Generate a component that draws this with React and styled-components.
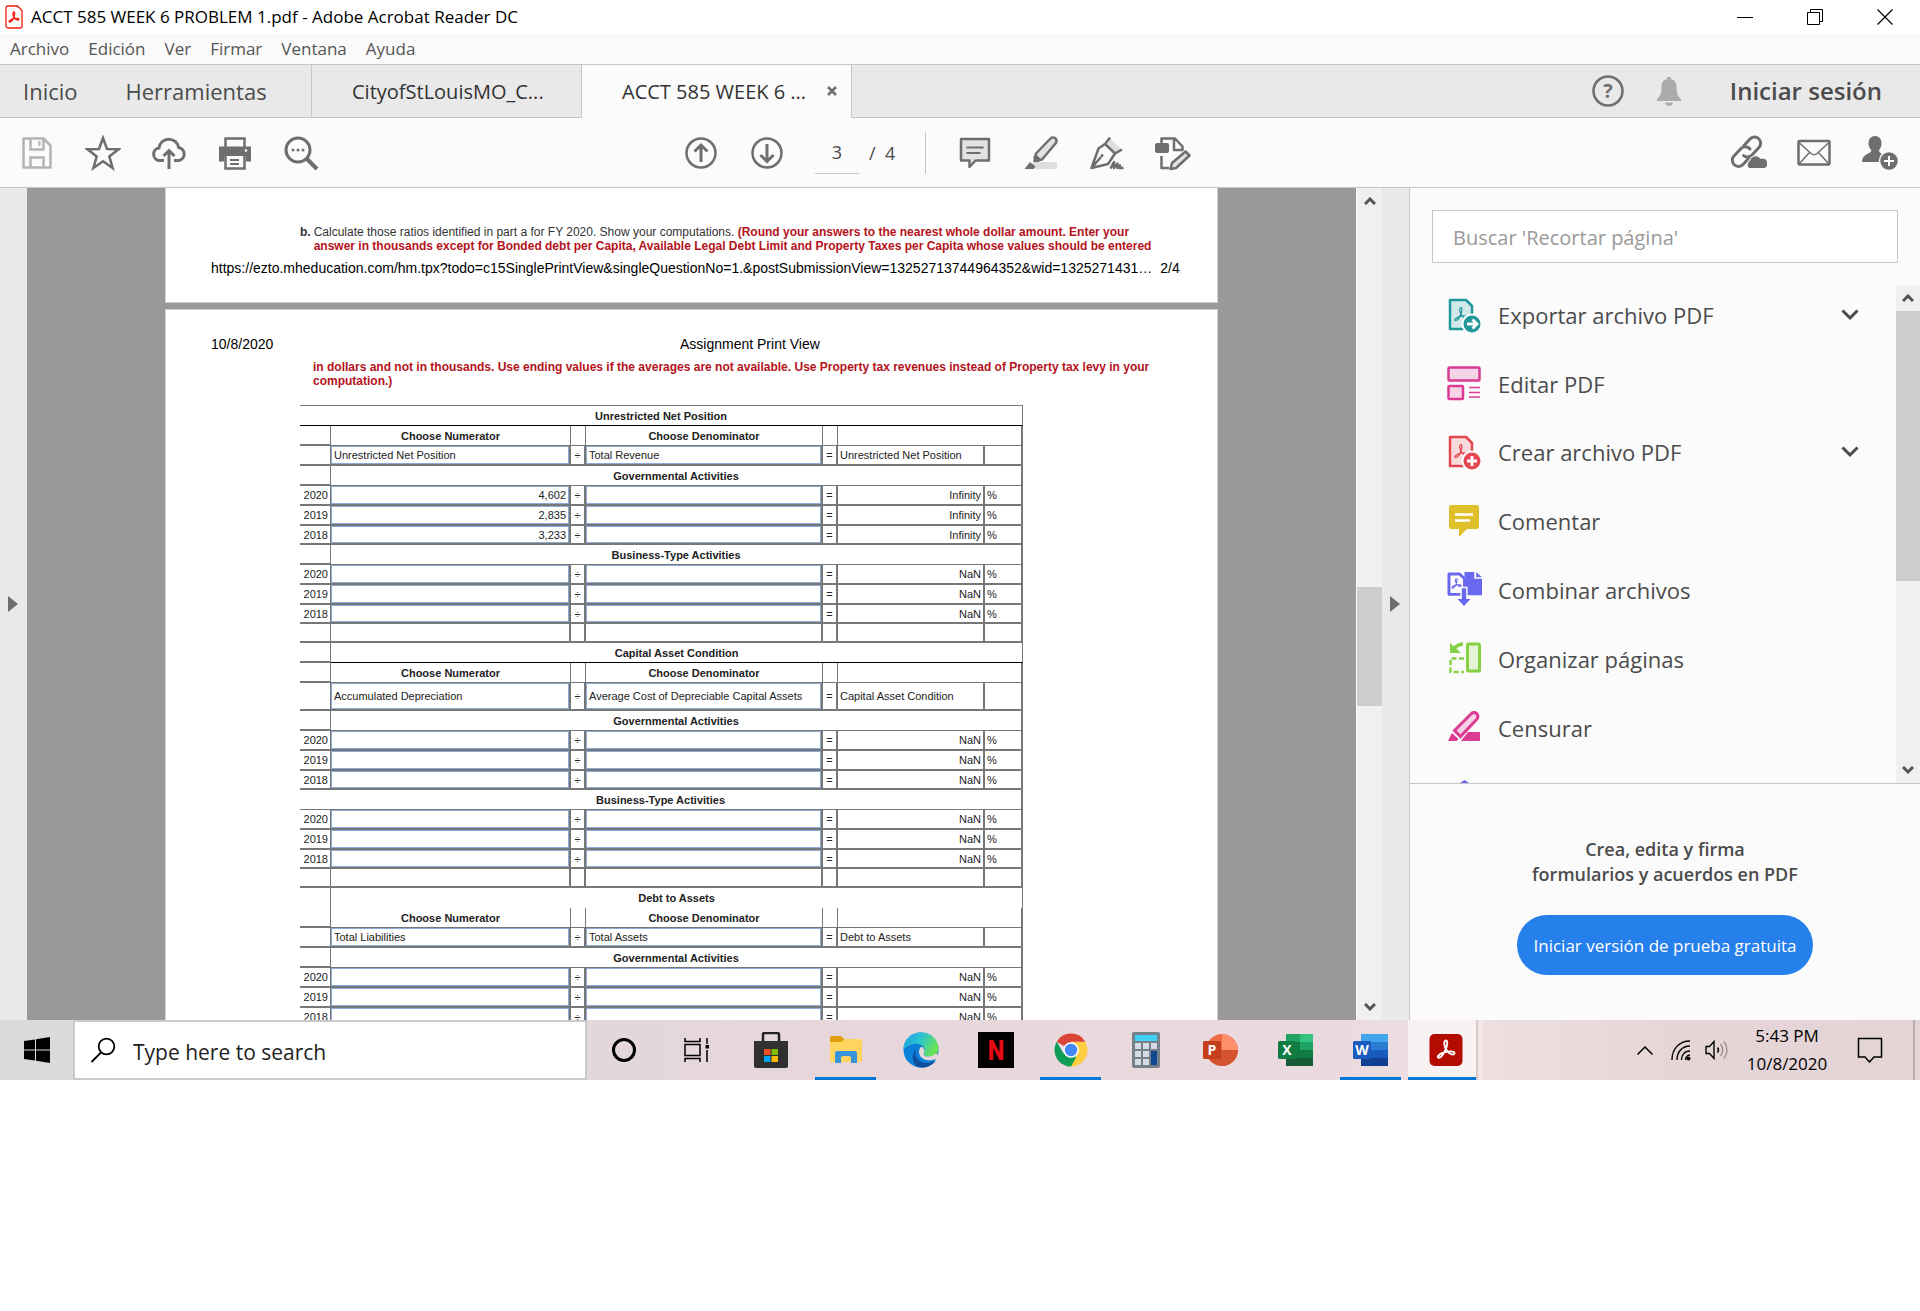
// src/App.jsx
import styled, { createGlobalStyle, css } from 'styled-components';

const GlobalStyle = createGlobalStyle`
  * {
    box-sizing: border-box;
  }

  body {
    margin: 0;
    background: #ffffff;
    font-family: "Open Sans", "Noto Sans", sans-serif;
    color: #4b4b4b;
  }

  button, input {
    font: inherit;
    color: inherit;
    border: 0;
    padding: 0;
    background: none;
  }
`;

const Screen = styled.div`
  aspect-ratio: 16 / 9;
  display: flex;
  flex-direction: column;
  overflow: hidden;
`;

/* ---------- window chrome ---------- */

const TitleBar = styled.header`
  flex: none;
  height: 34px;
  display: flex;
  align-items: center;
  padding-left: 5px;
  background: #ffffff;
`;

const WindowTitle = styled.h1`
  flex: 1;
  margin: 0 0 0 8px;
  font-size: 17px;
  font-weight: 400;
  line-height: 34px;
  color: #000000;
`;

const WindowButton = styled.button`
  width: 70px;
  height: 34px;
  display: flex;
  align-items: center;
  justify-content: center;
`;

const MenuBar = styled.nav`
  flex: none;
  height: 31px;
  display: flex;
  align-items: center;
  gap: 19px;
  padding-left: 10px;
  background: #fafafa;
  border-bottom: 1px solid #c6c6c6;
`;

const MenuItem = styled.button`
  font-size: 17px;
  line-height: 30px;
  color: #555555;
`;

const TabBar = styled.div`
  flex: none;
  height: 53px;
  display: flex;
  background: #e9e9e9;
`;

const TabGroup = styled.div`
  display: flex;
  align-items: center;
  gap: 48px;
  width: 312px;
  padding-left: 23px;
  border-right: 1px solid #c6c6c6;
  border-bottom: 1px solid #c6c6c6;
`;

const HomeTab = styled.button`
  font-size: 22px;
  line-height: 30px;
`;

const DocTab = styled.div`
  width: 270px;
  display: flex;
  align-items: center;
  gap: 17px;
  padding-left: 40px;
  font-size: 20px;
  color: #333333;
  border-right: 1px solid #c6c6c6;
  border-bottom: 1px solid ${(props) => (props.$active ? '#fbfbfb' : '#c6c6c6')};
  background: ${(props) => (props.$active ? '#fbfbfb' : 'transparent')};
`;

const DocTabName = styled.button`
  width: 188px;
  text-align: left;
  white-space: nowrap;
`;

const CloseTab = styled.button`
  display: flex;
`;

const AccountArea = styled.div`
  flex: 1;
  display: flex;
  align-items: center;
  justify-content: flex-end;
  padding-right: 38px;
  border-bottom: 1px solid #c6c6c6;
`;

const AccountButton = styled.button`
  width: 61px;
  display: flex;
  justify-content: center;
`;

const SignIn = styled.button`
  margin-left: 30px;
  font-size: 24px;
  font-weight: 600;
  line-height: 30px;
`;

/* ---------- toolbar ---------- */

const Toolbar = styled.div`
  flex: none;
  height: 70px;
  display: flex;
  align-items: center;
  background: #fbfbfb;
  border-bottom: 1px solid #c6c6c6;
`;

const FileTools = styled.div`
  flex: none;
  width: 668px;
  display: flex;
  padding-left: 4px;
`;

const PageTools = styled.div`
  flex: 1;
  display: flex;
  align-items: center;
`;

const ShareTools = styled.div`
  display: flex;
  padding-right: 7px;
`;

const ToolButton = styled.button`
  width: 66px;
  height: 42px;
  display: flex;
  align-items: center;
  justify-content: center;
  color: ${(props) => (props.$muted ? '#b4b4b4' : '#6e6e6e')};
`;

const PageInput = styled.input`
  width: 44px;
  height: 42px;
  margin-left: 15px;
  font-size: 18px;
  text-align: center;
  border-bottom: 1px solid #c6c6c6;
`;

const PageCount = styled.span`
  margin-left: 10px;
  font-size: 18px;
  white-space: pre;
`;

const ToolDivider = styled.span`
  width: 1px;
  height: 42px;
  margin: 0 16px 0 30px;
  background: #c6c6c6;
`;

/* ---------- workspace ---------- */

const Workspace = styled.main`
  flex: 1;
  min-height: 0;
  display: flex;
  background: #e9e9e9;
`;

const Rail = styled.button`
  flex: none;
  width: 27px;
  display: flex;
  align-items: center;
  padding-left: 8px;
  background: #e9e9e9;
`;

const Viewport = styled.section`
  flex: 1;
  min-width: 0;
  overflow: hidden;
  background: #999999;
  font-family: "Liberation Sans", Arial, sans-serif;
`;

const Page = styled.article`
  max-width: 1053px;
  margin: 0 auto 6px;
  background: #ffffff;
  border: 1px solid #cfcfcf;
  border-top-width: ${(props) => (props.$continued ? '0' : '1px')};
  padding: ${(props) => (props.$continued ? '37px 45px 26px' : '26px 45px 24px')};
`;

const Question = styled.p`
  display: flex;
  gap: 3px;
  margin: 0 0 0 89px;
  font-size: 12px;
  line-height: 14px;
  color: #333333;
  white-space: nowrap;
`;

const Instruction = styled.strong`
  color: #b5121b;
`;

const Continued = styled.p`
  margin: 8px 0 17px 102px;
  font-size: 12px;
  line-height: 14px;
  white-space: nowrap;
`;

const PageLine = styled.div`
  display: grid;
  grid-template-columns: ${(props) => (props.$footer ? 'auto 1fr' : '469px 1fr')};
  gap: ${(props) => (props.$footer ? '8px' : '0')};
  margin-top: ${(props) => (props.$footer ? '7px' : '0')};
  font-size: 14px;
  line-height: 16px;
  color: #000000;
  white-space: nowrap;
`;

const Ratios = styled.table`
  width: 723px;
  margin-left: 89px;
  table-layout: fixed;
  border-collapse: separate;
  border-spacing: 0;
  border-top: 1px solid #777777;
  font-size: 11px;
  line-height: 12px;
  color: #222222;
`;

const Row = styled.tr`
  height: ${(props) => props.$height || 20}px;
`;

const cell = css`
  padding: 0 2px;
  border: 0 solid #777777;
  border-right-width: 2px;
  border-bottom-width: 2px;
  white-space: nowrap;
  text-align: ${(props) => props.$align || 'left'};
`;

const Cell = styled.td`
  ${cell}
`;

const LabelCell = styled.td`
  ${cell}
  border-right-width: 1px;
  border-bottom-width: ${(props) => (props.$open ? '0' : '2px')};
  text-align: right;
`;

const Field = styled.td`
  ${cell}
  padding: 0 3px;
  box-shadow: inset 0 0 0 1px #8eaad6;
`;

const Sign = styled.td`
  ${cell}
  padding: 0;
  text-align: center;
`;

const Heading = styled.th`
  ${cell}
  text-align: center;
  border-bottom-width: ${(props) => (props.$open ? '0' : '1px')};
  border-bottom-color: ${(props) => (props.$rule ? '#000000' : '#777777')};
  border-right-width: ${(props) => (props.$edge ? '2px' : '1px')};
`;

/* ---------- scrollbars ---------- */

const ScrollRail = styled.div`
  flex: none;
  width: ${(props) => props.$width}px;
  display: flex;
  flex-direction: column;
  background: #f0f0f0;
  border-left: 1px solid #fbfbfb;
`;

const ScrollButton = styled.button`
  flex: none;
  height: 26px;
  display: flex;
  align-items: center;
  justify-content: center;
  color: #555555;
`;

const ScrollPart = styled.div`
  flex: ${(props) => props.$grow} 1 0;
  background: ${(props) => (props.$thumb ? '#cdcdcd' : 'transparent')};
`;

/* ---------- tools panel ---------- */

const ToolsPanel = styled.aside`
  flex: none;
  width: 511px;
  display: flex;
  flex-direction: column;
  background: #fbfbfb;
  border-left: 1px solid #c6c6c6;
`;

const ToolSearch = styled.input`
  flex: none;
  height: 53px;
  margin: 22px;
  padding: 2px 20px 0;
  font-size: 20px;
  background: #ffffff;
  border: 1px solid #c6c6c6;

  &::placeholder {
    color: #999999;
    opacity: 1;
  }
`;

const ToolScroller = styled.div`
  flex: none;
  height: 499px;
  display: flex;
  overflow: hidden;
  border-bottom: 1px solid #c6c6c6;
`;

const ToolList = styled.ul`
  flex: 1;
  display: flex;
  flex-direction: column;
  gap: 8px;
  margin: 0;
  padding: 0;
  list-style: none;
`;

const ToolItem = styled.li`
  flex: none;
  height: ${(props) => (props.$expands ? 60 : 61)}px;
  display: flex;
  align-items: center;
  padding: 0 36px 0 37px;
`;

const ToolLink = styled.button`
  flex: 1;
  display: flex;
  align-items: center;
  gap: 16px;
  font-size: 22px;
  line-height: 30px;
`;

const Promo = styled.div`
  flex: 1;
  display: flex;
  flex-direction: column;
  align-items: center;
  padding-top: 53px;
`;

const PromoText = styled.p`
  margin: 0 0 28px;
  font-size: 18px;
  font-weight: 600;
  line-height: 25px;
  text-align: center;
`;

const TrialButton = styled.button`
  height: 60px;
  padding: 0 16px;
  font-size: 17px;
  color: #ffffff;
  background: #2680eb;
  border-radius: 30px;
`;

/* ---------- taskbar ---------- */

const Taskbar = styled.footer`
  flex: none;
  height: 60px;
  display: flex;
  background: linear-gradient(90deg, #dadadd 0%, #e0d8db 20%, #e7d6da 45%, #ebdbe0 70%, #eedfe0 77%, #e6d5d7 88%, #e4d4d5 100%);
  color: #000000;
`;

const StartButton = styled.button`
  flex: none;
  width: 73px;
  display: flex;
  align-items: center;
  justify-content: center;
`;

const TaskSearch = styled.div`
  flex: none;
  width: 514px;
  display: flex;
  align-items: center;
  gap: 17px;
  padding-left: 15px;
  background: #ffffff;
  border: 2px solid #cacaca;
`;

const TaskInput = styled.input`
  flex: 1;
  padding-top: 3px;
  font-size: 21px;
  line-height: 30px;

  &::placeholder {
    color: #222222;
    opacity: 1;
  }
`;

const TaskButton = styled.button`
  width: ${(props) => (props.$system ? 73 : 75)}px;
  display: flex;
  align-items: center;
  justify-content: center;
  background-color: ${(props) => (props.$active ? '#f8f2f2' : 'transparent')};
  background-image: ${(props) => (props.$running ? 'linear-gradient(#0078d7, #0078d7)' : 'none')};
  background-size: ${(props) => (props.$active ? '100%' : '61px')} 3px;
  background-position: bottom center;
  background-repeat: no-repeat;
  box-shadow: ${(props) => (props.$active ? 'inset -5px 0 #f2e6e7, inset -7px 0 #d6cacb' : 'none')};
`;

const Tray = styled.div`
  flex: 1;
  display: flex;
  align-items: center;
  justify-content: flex-end;
`;

const TrayButton = styled.button`
  width: 36px;
  display: flex;
  align-items: center;
  justify-content: center;
`;

const Clock = styled.time`
  width: 96px;
  margin: 0 17px 0 4px;
  font-size: 17px;
  line-height: 28px;
  text-align: center;
`;

const ShowDesktop = styled.button`
  width: 7px;
  height: 60px;
  margin-left: 25px;
  border-left: 2px solid #b9adaf;
`;

/* ---------- icons ---------- */

const Icon = ({ w = 36, h = w, box, children }) => (
  <svg
    width={w}
    height={h}
    viewBox={box || `0 0 ${w} ${h}`}
    fill="none"
    stroke="currentColor"
    strokeWidth="2.5"
    aria-hidden="true"
  >
    {children}
  </svg>
);

const TREFOIL =
  'M12 3.5c1.6 0 1.6 2.8.6 6.2C11.2 14.2 8 20.5 5 20.8 2.8 20.8 3.6 17.8 8 16.1c3.6-1.4 8.6-2 11-1.4 2.6.8 1.6 3-.6 2.8C14.8 17 10.8 12.4 10.3 7.2 10.1 5 10.7 3.5 12 3.5z';

const PdfIcon = () => (
  <Icon w={18} h={24}>
    <path d="M3 1h9.500l4.500 4.500V21a2 2 0 0 1-2 2H3a2 2 0 0 1-2-2V3a2 2 0 0 1 2-2z" stroke="#f01c10" strokeWidth="1.300" />
    <path d={TREFOIL} transform="translate(2 5) scale(.58)" stroke="#f01c10" strokeWidth="2.400" />
  </Icon>
);

const SaveIcon = () => (
  <Icon w={32}>
    <path d="M2.500 1.500h20l7 7v22h-27z" strokeLinejoin="round" />
    <path d="M9.500 2v10.500h13V2M9.500 30V20.500h13V30" />
    <path d="M18.500 4v5" strokeWidth="2" />
  </Icon>
);

const StarIcon = () => (
  <Icon>
    <path d="M18 3l4 11 11.500.300-9.200 7.100 3.300 11.600L18 26.300 8.400 33l3.300-11.600L2.500 14.300 14 14z" />
  </Icon>
);

const CloudUpIcon = () => (
  <Icon>
    <path d="M13 25.500H8.500a6.300 6.300 0 0 1-.600-12.500 10 10 0 0 1 19.800-.500 6.600 6.600 0 0 1 0 13H23" strokeWidth="3" />
    <path d="M18 34V16M12.500 21l5.500-5.500 5.500 5.500" strokeWidth="3" />
  </Icon>
);

const PrintIcon = () => (
  <Icon>
    <path d="M8.500 12V3.500h19V12" />
    <path d="M2 11.500h32v15h-5V21H7v5.500H2z" fill="currentColor" stroke="none" />
    <path d="M8.500 21v12.500h19V21" />
    <path d="M13 25h9M13 29h9" strokeWidth="2" />
    <circle cx="29" cy="15.500" r="1.300" fill="#fff" stroke="none" />
  </Icon>
);

const FindIcon = () => (
  <Icon>
    <circle cx="15" cy="15" r="12" strokeWidth="3" />
    <path d="M23.500 23.500L34 34" strokeWidth="4" />
    <g fill="currentColor" stroke="none">
      <circle cx="10" cy="15" r="1.500" />
      <circle cx="15" cy="15" r="1.500" />
      <circle cx="20" cy="15" r="1.500" />
    </g>
  </Icon>
);

const ArrowIcon = ({ down }) => (
  <Icon w={34}>
    <circle cx="17" cy="17" r="14.500" />
    <path
      d={down ? 'M17 8v17M10.500 19l6.500 6.500 6.500-6.500' : 'M17 26V9M10.500 15.500L17 9l6.500 6.500'}
      strokeWidth="3"
    />
  </Icon>
);

const NoteIcon = () => (
  <Icon w={34}>
    <path d="M3 3h28v21.500H17.500L11.500 31v-6.500H3z" fill="#e2e2e2" strokeLinejoin="round" />
    <path d="M8.500 11.500h17M8.500 17h14" strokeWidth="2" />
  </Icon>
);

const MarkerIcon = () => (
  <Icon>
    <path d="M10 27h24v7H8z" fill="#dedede" stroke="none" />
    <path d="M13 18.500L27.500 3.500a3.500 3.500 0 0 1 5 5L19 24.500 11.500 26z" fill="#e2e2e2" strokeLinejoin="round" />
    <path d="M12.500 19l6 5.500-3.500 3-5-5zM7 27l5.500 4.500-2 2.500H1.500z" fill="currentColor" stroke="none" />
  </Icon>
);

const SignIcon = () => (
  <Icon>
    <path d="M21 3l-4 6 9 9 6-4z" fill="#dedede" stroke="none" />
    <path d="M21 2.500L16 9l10 9.500 7-4" />
    <path d="M16 9l-6.500 4.500L2.500 33l16.500-4 7-10.500M2.500 33L12 22" strokeLinejoin="round" />
    <circle cx="13" cy="20.500" r="1.500" fill="currentColor" stroke="none" />
    <path d="M21.500 33.500l3.500-6.500v6l3.500-4.500v4.500l2.500-2.500v2.500h3.500" strokeLinejoin="round" />
  </Icon>
);

const EditPageIcon = () => (
  <Icon>
    <path d="M6.500 9V3.500H20l7.500 8v3.500H19V4" strokeLinejoin="round" />
    <path d="M6.500 21v12H14" strokeLinejoin="round" />
    <rect x="0" y="8" width="14" height="10" rx="2" fill="currentColor" stroke="none" />
    <path d="M15.500 34l1.500-6L30.500 16.500l4 4L21 33z" fill="#e2e2e2" strokeLinejoin="round" />
  </Icon>
);

const LinkCloudIcon = () => (
  <Icon w={38}>
    <g strokeWidth="3" strokeLinecap="round">
      <path d="M15 11.500l6-6.500a6 6 0 0 1 9 8.500l-7 7.500a6 6 0 0 1-8.500.500" />
      <path d="M19.500 24.500l-5.500 6a6 6 0 0 1-9-8.500l7-7.500a6 6 0 0 1 9 .500" />
    </g>
    <path
      d="M20 34.500a4.500 4.500 0 0 1 .500-7.500 6 6 0 0 1 11-2.500 4.500 4.500 0 0 1 4 10z"
      fill="currentColor"
      stroke="#fbfbfb"
      strokeWidth="1"
    />
  </Icon>
);

const MailIcon = () => (
  <Icon w={34} h={28}>
    <rect x="1.500" y="2" width="31" height="23.500" rx="1" />
    <path d="M2 3.500l12 11q3 2.500 6 0l12-11M2.500 24.500l10-11M31.500 24.500l-10-11" strokeWidth="1.500" />
  </Icon>
);

const PersonAddIcon = () => (
  <Icon>
    <path
      d="M13 1a6.500 6.500 0 0 1 6.500 7c0 4-1.500 5.500-2.500 7.500 0 4 8 3.500 9 11.500H0c0-8 8.500-8 9.500-11.500C8 13.500 6.500 12 6.500 8A6.500 6.500 0 0 1 13 1z"
      fill="currentColor"
      stroke="none"
    />
    <circle cx="27" cy="26" r="9.500" fill="currentColor" stroke="#fbfbfb" strokeWidth="1.500" />
    <path d="M27 21v10M22 26h10" stroke="#fff" strokeWidth="2" />
  </Icon>
);

const HelpIcon = () => (
  <Icon w={32}>
    <circle cx="16" cy="16" r="14.500" stroke="#6e6e6e" />
    <text x="16" y="23" textAnchor="middle" fontSize="20" fontWeight="700" fill="#6e6e6e" stroke="none">?</text>
  </Icon>
);

const BellIcon = () => (
  <Icon w={26} h={32}>
    <path
      d="M11 2h4v2c4 1 5.500 4 5.500 8 0 7 1.500 9.500 4.500 12v2H1v-2c3-2.500 4.500-5 4.500-12 0-4 1.500-7 5.500-8zM9 27.500h8q-1 3.500-4 3.500t-4-3.500z"
      fill="#ababab"
      stroke="none"
    />
  </Icon>
);

const RailArrow = () => (
  <Icon w={10} h={16}>
    <path d="M0 0l10 8-10 8z" fill="#6e6e6e" stroke="none" />
  </Icon>
);

const Chevron = ({ up, w = 12, h = 8, weight = 3 }) => (
  <Icon w={w} h={h} box="0 0 12 8">
    <path d={up ? 'M1 7l5-5 5 5' : 'M1 1l5 5 5-5'} strokeWidth={weight} />
  </Icon>
);

const PdfBadgeIcon = ({ color, tint, add }) => (
  <Icon w={35}>
    <path d="M3 2h16l6 6v23H3z" fill={tint} stroke={color} strokeLinejoin="round" />
    <path d={TREFOIL} transform="translate(5 7) scale(.75)" stroke={color} strokeWidth="1.700" />
    <circle cx="25" cy="26" r="9.500" fill={color} stroke="#fbfbfb" strokeWidth="2" />
    <path d={add ? 'M25 21v10M20 26h10' : 'M20 26h9M25.500 21.500L30 26l-4.500 4.500'} stroke="#fff" strokeWidth="2.800" />
  </Icon>
);

const EditPdfIcon = () => (
  <Icon w={35}>
    <g stroke="#dc3b93" fill="#f7d3e6">
      <rect x="1.500" y="1.500" width="31" height="13" rx="1" />
      <rect x="1.500" y="20" width="14.500" height="13" rx="1" />
      <path d="M22 21.500h11M22 26.500h11M22 31h11" strokeWidth="1.500" />
    </g>
  </Icon>
);

const CommentIcon = () => (
  <Icon w={35}>
    <path d="M4 2h26a2 2 0 0 1 2 2v20a2 2 0 0 1-2 2H20l-8 8v-8H4a2 2 0 0 1-2-2V4a2 2 0 0 1 2-2z" fill="#dfbf2a" stroke="none" />
    <path d="M8 11.500h18M8 17.500h15" stroke="#fff" />
  </Icon>
);

const CombineIcon = () => (
  <Icon w={35} box="0 0 36 36">
    <path d="M18 0h10v7h8v17H18z" fill="#6968f0" stroke="none" />
    <path d="M30 0v5.500h6z" fill="#6968f0" stroke="none" />
    <path d="M2 2h11l5 5v16H2z" fill="#fbfbfb" stroke="#6968f0" strokeWidth="3" strokeLinejoin="round" />
    <path d={TREFOIL} transform="translate(3 5) scale(.56)" stroke="#6968f0" strokeWidth="2" />
    <path d="M14.500 16h6v11H26l-8.500 9L9 27h5.500z" fill="#6968f0" stroke="#fbfbfb" strokeWidth="1.500" />
  </Icon>
);

const OrganizeIcon = () => (
  <Icon w={35}>
    <g stroke="#86d143">
      <rect x="20.500" y="3" width="12" height="27" rx="1" fill="#e4f4d5" strokeWidth="3" />
      <path d="M17 17.500H3.500V31H17" strokeDasharray="5 2.500" />
      <path d="M16 3q-6 .500-9 5" strokeWidth="3.500" />
      <path d="M3 2v10h11z" fill="#86d143" stroke="none" />
    </g>
  </Icon>
);

const RedactIcon = () => (
  <Icon w={35}>
    <path d="M21 22h11a1 1 0 0 1 1 1v8H14z" fill="#dc3b93" stroke="none" />
    <path d="M7.500 20.500L24 4a3.500 3.500 0 0 1 6 5L13.500 26.500z" fill="#f7d3e6" stroke="#dc3b93" strokeWidth="3" />
    <path d="M5 23l6.500 6-2 2H1z" fill="#dc3b93" stroke="none" />
  </Icon>
);

const ProtectIcon = () => (
  <Icon w={35}>
    <path d="M3 8q9-1 14.500-5.500Q23 7 32 8v12q-4 10-14.500 13Q7 30 3 20z" fill="#d9d9fb" stroke="#6968f0" />
  </Icon>
);

const StartIcon = () => (
  <Icon w={26} h={26}>
    <path d="M0 4l11-1.600V12.500H0zM12 2.200L26 0v12.500H12zM0 13.500h11v10L0 22zM12 13.500h14V26l-14-2.200z" fill="#000" stroke="none" />
  </Icon>
);

const MagnifierIcon = () => (
  <Icon w={26}>
    <circle cx="16.500" cy="9.500" r="7.800" strokeWidth="1.800" />
    <path d="M11 15.500L1.500 25" strokeWidth="1.800" />
  </Icon>
);

const TaskViewIcon = () => (
  <Icon w={26} h={24}>
    <g strokeWidth="1.500">
      <rect x="1" y="6.500" width="15" height="11" />
      <path d="M1 0v3.500h15V0M1 24v-3.500h15V24M23 0v6M23 12v12" />
    </g>
    <rect x="21.500" y="7" width="3.500" height="3.500" fill="#000" stroke="none" />
  </Icon>
);

const StoreIcon = () => (
  <Icon w={36}>
    <path d="M10 11V2.500a1.500 1.500 0 0 1 1.500-1.500h13A1.500 1.500 0 0 1 26 2.500V11" stroke="#222" />
    <path d="M1 9h34v25a2 2 0 0 1-2 2H3a2 2 0 0 1-2-2z" fill="#303030" stroke="none" />
    <g stroke="none">
      <path d="M11 17h6.500v6H11z" fill="#f25022" />
      <path d="M18.500 17H25v6h-6.500z" fill="#7fba00" />
      <path d="M11 24h6.500v6H11z" fill="#00a4ef" />
      <path d="M18.500 24H25v6h-6.500z" fill="#ffb900" />
    </g>
  </Icon>
);

const FolderIcon = () => (
  <Icon w={34} h={28}>
    <g stroke="none">
      <path d="M1 2a2 2 0 0 1 2-2h9l3 3v4H1z" fill="#e09f0b" />
      <path d="M1 6h11l4-3h15a2 2 0 0 1 2 2v19a2 2 0 0 1-2 2H3a2 2 0 0 1-2-2z" fill="#ffd560" />
      <path d="M6 27V17a2 2 0 0 1 2-2h18a2 2 0 0 1 2 2v10h-6v-5a2 2 0 0 0-2-2h-6a2 2 0 0 0-2 2v5z" fill="#3a94dc" />
    </g>
  </Icon>
);

const EdgeIcon = () => (
  <Icon w={36}>
    <defs>
      <linearGradient id="edgeTop" x1="0" x2="1" y1="0" y2=".400">
        <stop offset="0" stopColor="#1b9de2" />
        <stop offset=".5" stopColor="#2cc3d2" />
        <stop offset="1" stopColor="#66e257" />
      </linearGradient>
    </defs>
    <g stroke="none">
      <circle cx="18" cy="18" r="17.500" fill="#0b80d8" />
      <path d="M.500 18C0 8 8 .500 18 .500S36 8 35.500 17c-.500 6-5 7.500-9 7.500-5 0-7-2-6-3.500 2-3 1-7-3-8.500-7-2-14 1-17 5.500z" fill="url(#edgeTop)" />
      <path d="M13 17c-3 8 4 14 11 14 4 0 7-1 9-2.500C30 33 24 36 18 35.500 10 35 7 25 13 17z" fill="#0f4f9e" />
      <path d="M18.500 14.500c-4 3-3 10 2 12.500 4 2 9 1.500 13.500-.500l2-3-3-2c-2 2-5 3-8 3-4 0-5-2-4-3.500 1-2 0-5-2.500-6.500z" fill="#e7d6da" />
    </g>
  </Icon>
);

const NetflixIcon = () => (
  <Icon w={36}>
    <path d="M0 0h36v36H0z" fill="#000" stroke="none" />
    <text
      x="18"
      y="28"
      textAnchor="middle"
      fontFamily="'Roboto Condensed', 'Liberation Sans Narrow', 'Roboto', sans-serif"
      fontSize="28"
      fontWeight="700"
      fill="#e50914"
      stroke="none"
    >
      N
    </text>
  </Icon>
);

const ChromeIcon = () => (
  <Icon w={34}>
    <g stroke="none">
      <path d="M17 17L2.700 8.800A16.500 16.500 0 0 1 31.300 8.800H17z" fill="#db4437" />
      <path d="M17 17L31.300 8.800A16.500 16.500 0 0 1 17 33.500z" fill="#ffcd40" />
      <path d="M17 17l5 7.500-5 9A16.500 16.500 0 0 1 2.700 8.800L9.500 20.500z" fill="#0f9d58" />
      <path d="M17 9h14.300L24 17z" fill="#ffcd40" />
      <circle cx="17" cy="17" r="7.800" fill="#fff" />
      <circle cx="17" cy="17" r="6.200" fill="#4285f4" />
    </g>
  </Icon>
);

const CalculatorIcon = () => (
  <Icon w={28} h={36}>
    <g stroke="none">
      <rect width="28" height="36" rx="2" fill="#75808a" />
      <path d="M3 3h22v6H3z" fill="#3fd0f5" />
      <path
        d="M3 11h6v6H3zM11 11h6v6h-6zM19 11h6v6h-6zM3 19h6v6H3zM11 19h6v6h-6zM3 27h6v6H3zM11 27h6v6h-6z"
        fill="#d4dbe4"
      />
      <path d="M19 19h6v14h-6z" fill="#12488f" />
    </g>
  </Icon>
);

const OFFICE = {
  P: { tile: '#c43e1c' },
  X: { tile: '#107c41', bands: ['#21a366', '#33c481', '#107c41', '#185c37'] },
  W: { tile: '#185abd', bands: ['#41a5ee', '#2b7cd3', '#185abd', '#103f91'] },
};

const OfficeIcon = ({ letter }) => {
  const { tile, bands } = OFFICE[letter];

  return (
    <Icon w={36} h={34}>
      <g stroke="none">
        {letter === 'P' && (
          <>
            <circle cx="19" cy="17" r="16" fill="#ed6c47" />
            <path d="M19 1a16 16 0 0 1 16 16H19z" fill="#ff8f6b" />
            <path d="M3 17h32a16 16 0 0 1-32 0z" fill="#d35230" />
          </>
        )}
        {letter === 'W' && bands.map((fill, i) => <rect key={fill} x="8" y={1 + i * 8} width="27" height="8" fill={fill} />)}
        {letter === 'X' && (
          <>
            <path d="M8 1h14v16H8z" fill={bands[0]} />
            <path d="M22 1h13v8H22z" fill={bands[1]} />
            <path d="M22 9h13v8H22z" fill={bands[0]} />
            <path d="M8 9h14v16H8zM22 17h13v8H22z" fill={bands[2]} />
            <path d="M8 25h27v8H8z" fill={bands[3]} />
          </>
        )}
        <rect y="8" width="18" height="18" rx="1.500" fill={tile} />
        <text x="9" y="22" textAnchor="middle" fontSize="14" fontWeight="700" fill="#fff">{letter}</text>
      </g>
    </Icon>
  );
};

const AcrobatIcon = () => (
  <Icon w={34}>
    <rect x=".500" y="1" width="33" height="32" rx="5" fill="#b30b00" stroke="none" />
    <path d={TREFOIL} transform="translate(5 4)" stroke="#fff" strokeWidth="1.900" />
  </Icon>
);

const WifiIcon = () => (
  <Icon w={20} h={22}>
    <g strokeWidth="1.400">
      <path d="M1 21C1 10 8 2 19 2M6 21C6 13 11 7 19 7M10.500 21c0-5 3-9 8.500-9M14.500 21c0-2.500 1.500-5 4.500-5" />
    </g>
    <circle cx="17.500" cy="19.500" r="2" fill="#000" stroke="none" />
  </Icon>
);

const VolumeIcon = () => (
  <Icon w={24} h={22}>
    <path d="M1 7.500v7h3.500L9 19.500v-17L4.500 7.500z" strokeWidth="1.400" />
    <path d="M12.500 8.500q2 2.500 0 5" strokeWidth="1.400" />
    <path d="M15.500 5q4.500 6 0 12M19 2.500q6 8.500 0 17" stroke="#9b9091" strokeWidth="1.400" />
  </Icon>
);

const NoticeIcon = () => (
  <Icon w={26}>
    <path d="M1.500 1.500h23v18.500H17l-4.500 5L8 20H1.500z" strokeWidth="1.500" />
  </Icon>
);

/* ---------- data ---------- */

const MENU = ['Archivo', 'Edición', 'Ver', 'Firmar', 'Ventana', 'Ayuda'];

const FILE_TOOLS = [
  { label: 'Guardar', icon: <SaveIcon />, muted: true },
  { label: 'Favoritos', icon: <StarIcon /> },
  { label: 'Subir', icon: <CloudUpIcon /> },
  { label: 'Imprimir', icon: <PrintIcon /> },
  { label: 'Buscar', icon: <FindIcon /> },
];

const MARKUP_TOOLS = [
  { label: 'Nota', icon: <NoteIcon /> },
  { label: 'Resaltar', icon: <MarkerIcon /> },
  { label: 'Firmar', icon: <SignIcon /> },
  { label: 'Editar página', icon: <EditPageIcon /> },
];

const SHARE_TOOLS = [
  { label: 'Compartir vínculo', icon: <LinkCloudIcon /> },
  { label: 'Correo', icon: <MailIcon /> },
  { label: 'Invitar', icon: <PersonAddIcon /> },
];

const PDF_TOOLS = [
  { name: 'Exportar archivo PDF', icon: <PdfBadgeIcon color="#1f979b" tint="#d2e9e9" />, expands: true },
  { name: 'Editar PDF', icon: <EditPdfIcon /> },
  { name: 'Crear archivo PDF', icon: <PdfBadgeIcon color="#e34850" tint="#f9dadc" add />, expands: true },
  { name: 'Comentar', icon: <CommentIcon /> },
  { name: 'Combinar archivos', icon: <CombineIcon /> },
  { name: 'Organizar páginas', icon: <OrganizeIcon /> },
  { name: 'Censurar', icon: <RedactIcon /> },
  { name: '', icon: <ProtectIcon /> },
];

const YEARS = ['2020', '2019', '2018'];

const SECTIONS = [
  {
    title: 'Unrestricted Net Position',
    numerator: 'Unrestricted Net Position',
    denominator: 'Total Revenue',
    values: ['4,602', '2,835', '3,233'],
    result: 'Infinity',
    wideTitle: true,
    rule: true,
  },
  {
    title: 'Capital Asset Condition',
    numerator: 'Accumulated Depreciation',
    denominator: 'Average Cost of Depreciable Capital Assets',
    values: [],
    result: 'NaN',
    tall: true,
    wideBusiness: true,
    rule: true,
  },
  {
    title: 'Debt to Assets',
    numerator: 'Total Liabilities',
    denominator: 'Total Assets',
    values: [],
    result: 'NaN',
  },
];

const APPS = [
  { name: 'Microsoft Store', icon: <StoreIcon /> },
  { name: 'File Explorer', icon: <FolderIcon />, running: true },
  { name: 'Edge', icon: <EdgeIcon /> },
  { name: 'Netflix', icon: <NetflixIcon /> },
  { name: 'Chrome', icon: <ChromeIcon />, running: true },
  { name: 'Calculator', icon: <CalculatorIcon /> },
  { name: 'PowerPoint', icon: <OfficeIcon letter="P" /> },
  { name: 'Excel', icon: <OfficeIcon letter="X" /> },
  { name: 'Word', icon: <OfficeIcon letter="W" />, running: true },
  { name: 'Acrobat Reader', icon: <AcrobatIcon />, running: true, active: true },
];

/* ---------- parts ---------- */

const Scrollbar = ({ width, before, thumb, after }) => (
  <ScrollRail $width={width}>
    <ScrollButton aria-label="Arriba"><Chevron up /></ScrollButton>
    <ScrollPart $grow={before} />
    <ScrollPart $grow={thumb} $thumb />
    <ScrollPart $grow={after} />
    <ScrollButton aria-label="Abajo"><Chevron /></ScrollButton>
  </ScrollRail>
);

const YearRows = ({ values = [], result }) =>
  YEARS.map((year, i) => (
    <Row key={year} $height={i === 2 ? 19 : 20}>
      <LabelCell>{year}</LabelCell>
      <Field $align="right">{values[i]}</Field>
      <Sign>÷</Sign>
      <Field />
      <Sign>=</Sign>
      <Cell $align="right">{result}</Cell>
      <Cell>%</Cell>
    </Row>
  ));

const Section = ({ section }) => (
  <tbody>
    <Row>
      {!section.wideTitle && <LabelCell $open={!section.rule} />}
      <Heading colSpan={section.wideTitle ? 7 : 6} $rule={section.rule} $open={!section.rule}>
        {section.title}
      </Heading>
    </Row>
    <Row>
      <LabelCell />
      <Heading>Choose Numerator</Heading>
      <Heading />
      <Heading>Choose Denominator</Heading>
      <Heading />
      <Heading colSpan={2} $edge />
    </Row>
    <Row $height={section.tall ? 28 : 20}>
      <LabelCell />
      <Field>{section.numerator}</Field>
      <Sign>÷</Sign>
      <Field>{section.denominator}</Field>
      <Sign>=</Sign>
      <Cell>{section.title}</Cell>
      <Cell />
    </Row>
    <Row>
      <LabelCell />
      <Heading colSpan={6} $edge>Governmental Activities</Heading>
    </Row>
    <YearRows values={section.values} result={section.result} />
    <Row>
      {!section.wideBusiness && <LabelCell />}
      <Heading colSpan={section.wideBusiness ? 7 : 6} $edge>Business-Type Activities</Heading>
    </Row>
    <YearRows result="NaN" />
    <Row $height={19}>
      <LabelCell />
      <Cell />
      <Cell />
      <Cell />
      <Cell />
      <Cell />
      <Cell />
    </Row>
  </tbody>
);

const App = () => {
  return (
    <Screen>
      <GlobalStyle />
      <TitleBar>
        <PdfIcon />
        <WindowTitle>ACCT 585 WEEK 6 PROBLEM 1.pdf - Adobe Acrobat Reader DC</WindowTitle>
        <WindowButton aria-label="Minimize">
          <Icon w={16}><path d="M0 8.500h16" stroke="#000" strokeWidth="1" /></Icon>
        </WindowButton>
        <WindowButton aria-label="Restore">
          <Icon w={16}>
            <path d="M.500 3.500h12v12h-12zM3.500 3V.500h12v12H13" stroke="#000" strokeWidth="1" />
          </Icon>
        </WindowButton>
        <WindowButton aria-label="Close">
          <Icon w={16}><path d="M.500.500l15 15M15.500.500l-15 15" stroke="#000" strokeWidth="1.200" /></Icon>
        </WindowButton>
      </TitleBar>

      <MenuBar>
        {MENU.map((item) => <MenuItem key={item}>{item}</MenuItem>)}
      </MenuBar>

      <TabBar>
        <TabGroup>
          <HomeTab>Inicio</HomeTab>
          <HomeTab>Herramientas</HomeTab>
        </TabGroup>
        <DocTab>
          <DocTabName>CityofStLouisMO_C...</DocTabName>
        </DocTab>
        <DocTab $active>
          <DocTabName>ACCT 585 WEEK 6 ...</DocTabName>
          <CloseTab aria-label="Cerrar">
            <Icon w={10}><path d="M1 1l8 8M9 1L1 9" stroke="#6e6e6e" /></Icon>
          </CloseTab>
        </DocTab>
        <AccountArea>
          <AccountButton aria-label="Ayuda"><HelpIcon /></AccountButton>
          <AccountButton aria-label="Notificaciones"><BellIcon /></AccountButton>
          <SignIn>Iniciar sesión</SignIn>
        </AccountArea>
      </TabBar>

      <Toolbar>
        <FileTools>
          {FILE_TOOLS.map((tool) => (
            <ToolButton key={tool.label} aria-label={tool.label} $muted={tool.muted}>{tool.icon}</ToolButton>
          ))}
        </FileTools>
        <PageTools>
          <ToolButton aria-label="Página anterior"><ArrowIcon /></ToolButton>
          <ToolButton aria-label="Página siguiente"><ArrowIcon down /></ToolButton>
          <PageInput aria-label="Página" defaultValue="3" />
          <PageCount>{'/  4'}</PageCount>
          <ToolDivider />
          {MARKUP_TOOLS.map((tool) => (
            <ToolButton key={tool.label} aria-label={tool.label}>{tool.icon}</ToolButton>
          ))}
        </PageTools>
        <ShareTools>
          {SHARE_TOOLS.map((tool) => (
            <ToolButton key={tool.label} aria-label={tool.label}>{tool.icon}</ToolButton>
          ))}
        </ShareTools>
      </Toolbar>

      <Workspace>
        <Rail aria-label="Panel izquierdo"><RailArrow /></Rail>
        <Viewport>
          <Page $continued>
            <Question>
              <b>b.</b>
              <span>
                Calculate those ratios identified in part a for FY 2020. Show your computations.{' '}
                <Instruction>
                  (Round your answers to the nearest whole dollar amount. Enter your
                  <br />
                  answer in thousands except for Bonded debt per Capita, Available Legal Debt Limit and Property Taxes per
                  Capita whose values should be entered
                </Instruction>
              </span>
            </Question>
            <PageLine $footer>
              <span>
                https://ezto.mheducation.com/hm.tpx?todo=c15SinglePrintView&amp;singleQuestionNo=1.&amp;postSubmissionView=13252713744964352&amp;wid=1325271431…
              </span>
              <span>2/4</span>
            </PageLine>
          </Page>

          <Page>
            <PageLine>
              <span>10/8/2020</span>
              <span>Assignment Print View</span>
            </PageLine>
            <Continued>
              <Instruction>
                in dollars and not in thousands. Use ending values if the averages are not available. Use Property tax
                revenues instead of Property tax levy in your
                <br />
                computation.)
              </Instruction>
            </Continued>
            <Ratios>
              <colgroup>
                <col width="31" />
                <col width="240" />
                <col width="15" />
                <col width="237" />
                <col width="15" />
                <col width="147" />
                <col width="38" />
              </colgroup>
              {SECTIONS.map((section) => <Section key={section.title} section={section} />)}
            </Ratios>
          </Page>
        </Viewport>
        <Scrollbar width={26} before={373} thumb={119} after={288} />
        <Rail aria-label="Panel derecho"><RailArrow /></Rail>

        <ToolsPanel>
          <ToolSearch aria-label="Buscar herramientas" placeholder="Buscar 'Recortar página'" />
          <ToolScroller>
            <ToolList>
              {PDF_TOOLS.map((tool) => (
                <ToolItem key={tool.name} $expands={tool.expands}>
                  <ToolLink aria-label={tool.name || 'Proteger'}>{tool.icon}{tool.name}</ToolLink>
                  {tool.expands && <Chevron w={18} h={12} weight={2} />}
                </ToolItem>
              ))}
            </ToolList>
            <Scrollbar width={25} before={0} thumb={270} after={176} />
          </ToolScroller>
          <Promo>
            <PromoText>
              Crea, edita y firma
              <br />
              formularios y acuerdos en PDF
            </PromoText>
            <TrialButton>Iniciar versión de prueba gratuita</TrialButton>
          </Promo>
        </ToolsPanel>
      </Workspace>

      <Taskbar>
        <StartButton aria-label="Start"><StartIcon /></StartButton>
        <TaskSearch>
          <MagnifierIcon />
          <TaskInput aria-label="Search" placeholder="Type here to search" />
        </TaskSearch>
        <TaskButton $system aria-label="Cortana">
          <Icon w={26}><circle cx="13" cy="13" r="10.500" strokeWidth="3" /></Icon>
        </TaskButton>
        <TaskButton $system aria-label="Task View"><TaskViewIcon /></TaskButton>
        {APPS.map((app) => (
          <TaskButton key={app.name} aria-label={app.name} $running={app.running} $active={app.active}>
            {app.icon}
          </TaskButton>
        ))}
        <Tray>
          <TrayButton aria-label="Hidden icons"><Chevron up w={18} h={12} weight={1} /></TrayButton>
          <TrayButton aria-label="Network"><WifiIcon /></TrayButton>
          <TrayButton aria-label="Volume"><VolumeIcon /></TrayButton>
          <Clock>
            5:43 PM
            <br />
            10/8/2020
          </Clock>
          <TrayButton aria-label="Notifications"><NoticeIcon /></TrayButton>
          <ShowDesktop aria-label="Show desktop" />
        </Tray>
      </Taskbar>
    </Screen>
  );
};

export default App;
